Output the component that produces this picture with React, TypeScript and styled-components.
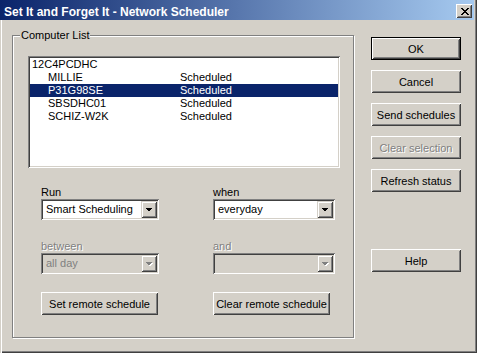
import React from 'react';
import styled, {createGlobalStyle, css} from 'styled-components';

const GlobalStyle = createGlobalStyle`
  html, body {
    margin: 0;
    padding: 0;
    background: #d4d0c8;
  }
  body {
    font-family: "Liberation Sans", Arial, sans-serif;
    font-size: 11px;
    color: #000;
  }
`;

interface ListItem {
  id: string;
  name: string;
  status?: string;
  indent?: boolean;
}

const computers: ListItem[] = [
  {id: 'root', name: '12C4PCDHC'},
  {id: 'millie', name: 'MILLIE', status: 'Scheduled', indent: true},
  {id: 'p31', name: 'P31G98SE', status: 'Scheduled', indent: true},
  {id: 'sbs', name: 'SBSDHC01', status: 'Scheduled', indent: true},
  {id: 'schiz', name: 'SCHIZ-W2K', status: 'Scheduled', indent: true},
];

const selectedId = 'p31';

// pixel map of the win2k caption close glyph
const closeGlyph = [
  'xx....xx',
  '.xx..xx.',
  '..xxxx..',
  '...xx...',
  '..xxxx..',
  '.xx..xx.',
  'xx....xx',
];

function CloseGlyph() {
  return (
    <svg width="8" height="7" viewBox="0 0 8 7" shapeRendering="crispEdges">
      {closeGlyph.map((row, y) =>
        row.split('').map((c, x) =>
          c === 'x' ? <rect key={`${x}-${y}`} x={x} y={y} width="1" height="1" fill="#000" /> : null,
        ),
      )}
    </svg>
  );
}

function Arrow({disabled}: {disabled?: boolean}) {
  return (
    <svg width="8" height="5" viewBox="0 0 8 5" shapeRendering="crispEdges">
      {disabled && <polygon points="1,1 8,1 4.5,4.5" fill="#fff" />}
      <polygon points="0,0 7,0 3.5,3.5" fill={disabled ? '#808080' : '#000'} />
    </svg>
  );
}

interface ComboProps {
  value: string;
  disabled?: boolean;
}

function Combo({value, disabled}: ComboProps) {
  return (
    <ComboBox $disabled={disabled}>
      <ComboText $disabled={disabled}>{value}</ComboText>
      <DropButton>
        <Arrow disabled={disabled} />
      </DropButton>
    </ComboBox>
  );
}

export default function App() {
  return (
    <>
      <GlobalStyle />
      <Window>
        <TitleBar>
          <Title>Set It and Forget It - Network Scheduler</Title>
          <CloseButton>
            <CloseGlyph />
          </CloseButton>
        </TitleBar>
        <Body>
          <GroupBox>
            <Legend>Computer List</Legend>
            <ListBox>
              {computers.map((item) => (
                <ListRow key={item.id} $selected={item.id === selectedId} $indent={item.indent}>
                  <NameCell $indent={item.indent}>{item.name}</NameCell>
                  {item.status && <span>{item.status}</span>}
                </ListRow>
              ))}
            </ListBox>
            <Controls>
              <Field>
                <FieldLabel>Run</FieldLabel>
                <Combo value="Smart Scheduling" />
              </Field>
              <Field>
                <FieldLabel>when</FieldLabel>
                <Combo value="everyday" />
              </Field>
              <Field>
                <FieldLabel $disabled>between</FieldLabel>
                <Combo value="all day" disabled />
              </Field>
              <Field>
                <FieldLabel $disabled>and</FieldLabel>
                <Combo value="" disabled />
              </Field>
              <PushButton $width={117}>Set remote schedule</PushButton>
              <PushButton $width={117}>Clear remote schedule</PushButton>
            </Controls>
          </GroupBox>
          <ButtonColumn>
            <PushButton $default>OK</PushButton>
            <PushButton>Cancel</PushButton>
            <PushButton>Send schedules</PushButton>
            <PushButton $disabled>Clear selection</PushButton>
            <PushButton>Refresh status</PushButton>
            <PushButton $spaced>Help</PushButton>
          </ButtonColumn>
        </Body>
      </Window>
    </>
  );
}

const raised = css`
  box-shadow:
    inset 1px 1px 0 #fff,
    inset -1px -1px 0 #404040,
    inset 2px 2px 0 #d4d0c8,
    inset -2px -2px 0 #808080;
`;

const sunken = css`
  box-shadow:
    inset 1px 1px 0 #808080,
    inset -1px -1px 0 #fff,
    inset 2px 2px 0 #404040,
    inset -2px -2px 0 #d4d0c8;
`;

const Window = styled.div`
  width: 477px;
  height: 353px;
  box-sizing: border-box;
  display: flex;
  flex-direction: column;
  background: #d4d0c8;
  padding: 0 3px 4px 0;
  box-shadow:
    inset 1px 0 0 #d4d0c8,
    inset 2px 0 0 #fff,
    inset -1px -1px 0 #404040,
    inset -2px -2px 0 #808080;
`;

const TitleBar = styled.div`
  height: 20px;
  display: flex;
  align-items: center;
  justify-content: space-between;
  padding: 0 2px 0 4px;
  background: linear-gradient(to right, #0a246a, #a6caf0);
`;

const Title = styled.span`
  color: #fff;
  font-weight: bold;
  font-size: 12px;
  margin-top: 3px;
  white-space: nowrap;
`;

const CloseButton = styled.div`
  width: 16px;
  height: 14px;
  margin-top: 2px;
  box-sizing: border-box;
  display: flex;
  align-items: center;
  justify-content: center;
  padding-left: 1px;
  background: #d4d0c8;
  ${raised};
`;

const Body = styled.div`
  flex: 1;
  display: flex;
  align-items: flex-start;
  padding: 15px 0 0 12px;
`;

const GroupBox = styled.div`
  position: relative;
  width: 342px;
  height: 303px;
  box-sizing: border-box;
  padding: 20px 0 0 15px;
  border: 1px solid #808080;
  box-shadow:
    1px 1px 0 #fff,
    inset 1px 1px 0 #fff;
`;

const Legend = styled.span`
  position: absolute;
  top: -7px;
  left: 7px;
  padding: 0 1px;
  line-height: 13px;
  background: #d4d0c8;
`;

const ListBox = styled.div`
  width: 312px;
  height: 112px;
  box-sizing: border-box;
  padding: 2px;
  background: #fff;
  ${sunken};
`;

const ListRow = styled.div<{$selected?: boolean; $indent?: boolean}>`
  display: flex;
  height: 13px;
  line-height: 13px;
  padding-left: ${(p) => (p.$indent ? 18 : 2)}px;
  background: ${(p) => (p.$selected ? '#0a246a' : 'transparent')};
  color: ${(p) => (p.$selected ? '#fff' : '#000')};
  white-space: nowrap;
`;

const NameCell = styled.span<{$indent?: boolean}>`
  width: ${(p) => (p.$indent ? '132px' : 'auto')};
`;

const Controls = styled.div`
  display: grid;
  grid-template-columns: 118px 122px;
  column-gap: 54px;
  row-gap: 18px;
  margin: 17px 0 0 13px;
  & > :nth-child(3),
  & > :nth-child(4) {
    margin-top: 1px;
  }
`;

const Field = styled.div`
  display: flex;
  flex-direction: column;
`;

const FieldLabel = styled.span<{$disabled?: boolean}>`
  height: 14px;
  line-height: 14px;
  color: ${(p) => (p.$disabled ? '#808080' : '#000')};
  text-shadow: ${(p) => (p.$disabled ? '1px 1px 0 #fff' : 'none')};
`;

const ComboBox = styled.div<{$disabled?: boolean}>`
  height: 21px;
  box-sizing: border-box;
  display: flex;
  align-items: stretch;
  padding: 2px;
  background: ${(p) => (p.$disabled ? '#d4d0c8' : '#fff')};
  ${sunken};
`;

const ComboText = styled.span<{$disabled?: boolean}>`
  flex: 1;
  padding-left: 3px;
  line-height: 17px;
  color: ${(p) => (p.$disabled ? '#808080' : '#000')};
  white-space: nowrap;
`;

const DropButton = styled.div`
  width: 16px;
  box-sizing: border-box;
  display: flex;
  align-items: center;
  justify-content: center;
  padding-top: 1px;
  background: #d4d0c8;
  box-shadow:
    inset 1px 1px 0 #d4d0c8,
    inset -1px -1px 0 #404040,
    inset 2px 2px 0 #fff,
    inset -2px -2px 0 #808080;
`;

const ButtonColumn = styled.div`
  display: flex;
  flex-direction: column;
  gap: 10px;
  margin: 2px 0 0 17px;
`;

const PushButton = styled.div<{$default?: boolean; $disabled?: boolean; $spaced?: boolean; $width?: number}>`
  width: ${(p) => p.$width ?? 90}px;
  height: 23px;
  box-sizing: border-box;
  display: flex;
  align-items: center;
  justify-content: center;
  white-space: nowrap;
  background: #d4d0c8;
  color: ${(p) => (p.$disabled ? '#808080' : '#000')};
  text-shadow: ${(p) => (p.$disabled ? '1px 1px 0 #fff' : 'none')};
  margin-top: ${(p) => (p.$spaced ? 47 : 0)}px;
  ${(p) =>
    p.$default
      ? css`
          border: 1px solid #000;
          box-shadow:
            inset 1px 1px 0 #fff,
            inset -1px -1px 0 #404040,
            inset 2px 2px 0 #d4d0c8,
            inset -2px -2px 0 #808080;
        `
      : raised};
`;
